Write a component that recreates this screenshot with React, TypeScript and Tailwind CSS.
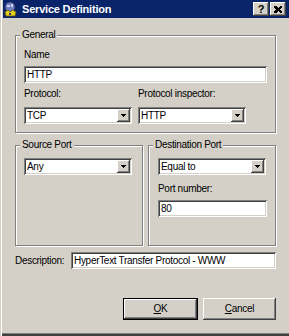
import React from "react";

const raised =
  "shadow-[inset_-1px_-1px_0_#404040,inset_1px_1px_0_#fff,inset_-2px_-2px_0_#808080,inset_2px_2px_0_#d4d0c8]";
const sunken =
  "shadow-[inset_1px_1px_0_#808080,inset_-1px_-1px_0_#fff,inset_2px_2px_0_#404040,inset_-2px_-2px_0_#d4d0c8]";

function Group({
  label,
  className,
  children,
}: {
  label: string;
  className?: string;
  children?: React.ReactNode;
}) {
  return (
    <div
      className={`relative border border-[#808080] shadow-[inset_1px_1px_0_#fff,1px_1px_0_#fff] ${className ?? ""}`}
    >
      <span className="absolute left-[4px] top-[-7px] bg-[#d4d0c8] px-[2px] leading-[12px]">
        {label}
      </span>
      {children}
    </div>
  );
}

function Field({ value, className }: { value: string; className?: string }) {
  return (
    <div
      className={`h-[17px] bg-white ${sunken} flex items-center pl-[3px] leading-[12px] ${className ?? ""}`}
    >
      <span>{value}</span>
    </div>
  );
}

function Arrow() {
  return (
    <svg width="5" height="3" viewBox="0 0 5 3" shapeRendering="crispEdges">
      <rect x="0" y="0" width="5" height="1" fill="#000" />
      <rect x="1" y="1" width="3" height="1" fill="#000" />
      <rect x="2" y="2" width="1" height="1" fill="#000" />
    </svg>
  );
}

function Combo({ value, className }: { value: string; className?: string }) {
  return (
    <div
      className={`h-[17px] bg-white ${sunken} flex items-center pl-[3px] pr-[2px] leading-[12px] ${className ?? ""}`}
    >
      <span className="flex-1">{value}</span>
      <div
        className={`w-[13px] h-[13px] bg-[#d4d0c8] ${raised} flex items-center justify-center`}
      >
        <Arrow />
      </div>
    </div>
  );
}

function TitleIcon() {
  return (
    <svg width="14" height="16" viewBox="0 0 14 16">
      <circle cx="6" cy="6" r="5" fill="#6f7fc0" stroke="#2c3570" strokeWidth="1" />
      <path d="M3 4h3v2H3z M7 3h2v3H7z" fill="#c8d0f0" />
      <path d="M1 11l3-2 2 2 3-2 3 2-1 4H2z" fill="#e8d020" stroke="#6a5a00" strokeWidth="0.8" />
      <path d="M5 12h2v2H5z" fill="#2c3570" />
    </svg>
  );
}

function CaptionButton({ children }: { children: React.ReactNode }) {
  return (
    <div
      className={`w-[16px] h-[14px] bg-[#d4d0c8] ${raised} flex items-center justify-center text-black`}
    >
      {children}
    </div>
  );
}

export default function App() {
  return (
    <div
      className="w-[289px] h-[336px] bg-[#d4d0c8] overflow-hidden flex flex-col pl-[3px] text-black text-[10px] tracking-[-0.3px] shadow-[inset_1px_0_0_#d4d0c8,inset_2px_0_0_#fff,inset_0_-2px_0_#404040,inset_0_-3px_0_#808080]"
      style={{ fontFamily: '"Liberation Sans", Arial, sans-serif' }}
    >
      {/* Title bar */}
      <div className="h-[18px] bg-[#0a246a] flex items-center shrink-0">
        <div className="ml-[1px] flex items-center">
          <TitleIcon />
        </div>
        <span className="ml-[4px] text-white font-bold text-[11px] tracking-[-0.2px] leading-[14px]">
          Service Definition
        </span>
        <div className="ml-auto mr-[3px] flex items-center gap-[1px]">
          <CaptionButton>
            <span className="font-bold text-[11px] leading-[11px] tracking-normal">?</span>
          </CaptionButton>
          <CaptionButton>
            <svg width="8" height="7" viewBox="0 0 8 7" shapeRendering="crispEdges">
              <path
                d="M0 0h2l2 2 2-2h2v1L6 3.5 8 6v1H6L4 5 2 7H0V6l2-2.5L0 1z"
                fill="#000"
              />
            </svg>
          </CaptionButton>
        </div>
      </div>

      {/* Content */}
      <div className="pl-[12px] flex flex-col">
        <Group label="General" className="mt-[17px] w-[261px] h-[98px] px-[8px] pt-[13px]">
          <div className="leading-[12px]">Name</div>
          <Field value="HTTP" className="mt-[5px] w-[243px]" />
          <div className="mt-[5px] grid grid-cols-[108px_108px] gap-x-[6px]">
            <div className="leading-[12px]">Protocol:</div>
            <div className="leading-[12px]">Protocol inspector:</div>
            <Combo value="TCP" className="mt-[7px]" />
            <Combo value="HTTP" className="mt-[7px]" />
          </div>
        </Group>

        <div className="mt-[12px] flex gap-[5px] w-[261px]">
          <Group label="Source Port" className="w-[128px] h-[101px] pl-[8px] pt-[12px]">
            <Combo value="Any" className="w-[108px]" />
          </Group>
          <Group label="Destination Port" className="w-[128px] h-[101px] pl-[9px] pt-[12px]">
            <Combo value="Equal to" className="w-[108px]" />
            <div className="mt-[8px] leading-[12px]">Port number:</div>
            <Field value="80" className="mt-[5px] w-[109px]" />
          </Group>
        </div>

        <div className="mt-[6px] flex items-center w-[261px]">
          <span className="w-[56px] leading-[12px]">Description:</span>
          <Field value="HyperText Transfer Protocol - WWW" className="w-[205px]" />
        </div>

        <div className="mt-[29px] flex justify-end gap-[5px] w-[261px]">
          <div className="w-[75px] h-[22px] border border-black">
            <div
              className={`w-full h-full ${raised} flex items-center justify-center leading-[12px]`}
            >
              <span>
                <span className="underline">O</span>K
              </span>
            </div>
          </div>
          <div
            className={`w-[73px] h-[22px] ${raised} flex items-center justify-center leading-[12px]`}
          >
            <span>
              <span className="underline">C</span>ancel
            </span>
          </div>
        </div>
      </div>
    </div>
  );
}
